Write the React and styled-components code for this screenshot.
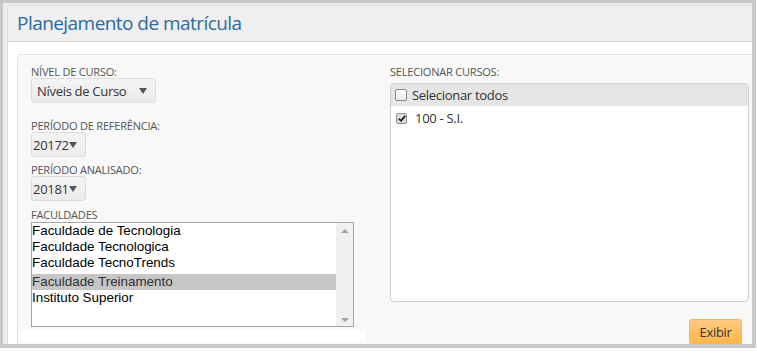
import React from "react";
import styled, { createGlobalStyle } from "styled-components";

const GlobalStyle = createGlobalStyle`
  html, body {
    margin: 0;
    padding: 0;
    background: #fff;
  }
  body {
    font-family: "Open Sans", "Liberation Sans", sans-serif;
    color: #333;
  }
`;

/* moldura cinza em volta do painel */
const Frame = styled.div`
  box-sizing: border-box;
  width: 756px;
  height: 348px;
  border: 3px solid #c8c8c8;
  border-right-width: 4px;
  border-bottom-width: 4px;
  padding: 2px 0 0 4px;
  background: #ececec;
  overflow: hidden;
`;

const Panel = styled.div`
  border: 1px solid #dcdcdc;
  border-right: none;
  border-radius: 4px 0 0 0;
  background: #fff;
  height: 100%;
`;

const Heading = styled.div`
  background: #efefef;
  border-bottom: 1px solid #d6d6d6;
  border-radius: 3px 0 0 0;
  padding: 5px 9px 6px;
`;

const Title = styled.h3`
  margin: 0;
  font-size: 19px;
  line-height: 24px;
  font-weight: 400;
  color: #2d6aa0;
  letter-spacing: -0.55px;
`;

const Body = styled.div`
  padding: 12px 0 0 9px;
`;

const Well = styled.div`
  background: #f8f8f8;
  border: 1px solid #e3e3e3;
  border-right: none;
  border-radius: 4px 0 0 0;
  padding: 11px 0 0 13px;
  min-height: 300px;
`;

const Columns = styled.div`
  display: grid;
  grid-template-columns: 345px 359px;
  column-gap: 14px;
  align-items: start;
`;

const Column = styled.div`
  display: flex;
  flex-direction: column;
  align-items: flex-start;
`;

const Field = styled.div`
  display: flex;
  flex-direction: column;
  align-items: flex-start;
  margin-bottom: ${(p) => p.$gap || 0}px;
`;

const Label = styled.label`
  display: block;
  font-size: 11px;
  line-height: 12px;
  color: #555;
  text-transform: uppercase;
  margin-bottom: ${(p) => p.$mb || 0}px;
  letter-spacing: -0.2px;
`;

const SelectButton = styled.div`
  box-sizing: border-box;
  display: flex;
  align-items: center;
  justify-content: space-between;
  width: ${(p) => p.$w}px;
  height: 25px;
  padding: 0 ${(p) => p.$pr}px 0 ${(p) => p.$pl}px;
  background: linear-gradient(#f4f4f4, #ebebeb);
  border: 1px solid #dcdcdc;
  border-radius: 3px;
  font-size: 13px;
  color: #333;
  letter-spacing: -0.3px;
`;

const Caret = styled.span`
  width: 0;
  height: 0;
  border-left: 4px solid transparent;
  border-right: 4px solid transparent;
  border-top: 6px solid #555;
`;

const ListBox = styled.div`
  box-sizing: border-box;
  display: flex;
  width: 323px;
  height: 105px;
  border: 1px solid #a5a5a5;
  background: #fff;
`;

const Options = styled.div`
  flex: 1;
`;

const Option = styled.div`
  font-family: "Liberation Sans", Arial, sans-serif;
  font-size: 13.4px;
  line-height: 16px;
  color: ${(p) => (p.$selected ? "#333" : "#000")};
  background: ${(p) => (p.$selected ? "#c6c6c6" : "transparent")};
  margin-top: ${(p) => (p.$gap ? 3 : 0)}px;
  white-space: nowrap;
`;

const ScrollBar = styled.div`
  width: 17px;
  background: #f0f0f0;
  display: flex;
  flex-direction: column;
  justify-content: space-between;
  align-items: center;
  padding: 6px 0 4px;
`;

const Arrow = styled.span`
  width: 0;
  height: 0;
  border-left: 4px solid transparent;
  border-right: 4px solid transparent;
  ${(p) =>
    p.$up ? "border-bottom: 4px solid #a3a3a3;" : "border-top: 4px solid #a3a3a3;"}
`;

const Strip = styled.div`
  width: 345px;
  height: 12px;
  margin: 3px 0 0 -11px;
  background: #fff;
`;

const CourseBox = styled.div`
  box-sizing: border-box;
  width: 359px;
  height: 219px;
  border: 1px solid #cfcfcf;
  border-radius: 4px;
  background: #fff;
  overflow: hidden;
`;

const CourseRow = styled.div`
  display: flex;
  align-items: center;
  gap: ${(p) => (p.$header ? 5 : 8)}px;
  height: ${(p) => (p.$header ? 22 : 24)}px;
  padding-left: ${(p) => (p.$header ? 4 : 5)}px;
  background: ${(p) => (p.$header ? "#e5e5e5" : "#fff")};
  font-size: 13px;
  color: #333;
  letter-spacing: -0.3px;
`;

const Check = styled.span`
  box-sizing: border-box;
  display: inline-flex;
  align-items: center;
  justify-content: center;
  width: ${(p) => (p.$checked ? 11 : 12)}px;
  height: ${(p) => (p.$checked ? 11 : 12)}px;
  border: 1px solid ${(p) => (p.$checked ? "#8f8f8f" : "#8a8a8a")};
  border-radius: 2px;
  background: ${(p) => (p.$checked ? "#dedede" : "linear-gradient(#fdfdfd, #ececec)")};
`;

const ButtonRow = styled.div`
  display: flex;
  justify-content: flex-end;
  width: 100%;
  margin-top: 17px;
`;

const Button = styled.button`
  box-sizing: border-box;
  width: 53px;
  height: 26px;
  margin-right: 7px;
  padding: 0;
  font-family: "Open Sans", "Liberation Sans", sans-serif;
  font-size: 13px;
  color: #333;
  background: linear-gradient(#ffcb82, #ffb547);
  border: 1px solid #f3b460;
  border-radius: 3px;
  letter-spacing: -0.3px;
`;

function Select({ value, width, pl, pr }) {
  return (
    <SelectButton $w={width} $pl={pl} $pr={pr}>
      <span>{value}</span>
      <Caret />
    </SelectButton>
  );
}

function Checkbox({ checked }) {
  return (
    <Check $checked={checked}>
      {checked && (
        <svg width="8" height="7" viewBox="0 0 8 7">
          <path d="M0.8 3.6 L3 5.8 L7.2 0.8" fill="none" stroke="#222" strokeWidth="1.8" />
        </svg>
      )}
    </Check>
  );
}

const faculdades = [
  "Faculdade de Tecnologia",
  "Faculdade Tecnologica",
  "Faculdade TecnoTrends",
  "Faculdade Treinamento",
  "Instituto Superior",
];

export default function App() {
  return (
    <>
      <GlobalStyle />
      <Frame>
        <Panel>
          <Heading>
            <Title>Planejamento de matrícula</Title>
          </Heading>
          <Body>
            <Well>
              <Columns>
                <Column>
                  <Field $gap={17}>
                    <Label>Nível de curso:</Label>
                    <Select value="Níveis de Curso" width={125} pl={5} pr={8} />
                  </Field>
                  <Field $gap={7}>
                    <Label>Período de referência:</Label>
                    <Select value="20172" width={55} pl={1} pr={9} />
                  </Field>
                  <Field $gap={8}>
                    <Label>Período analisado:</Label>
                    <Select value="20181" width={55} pl={1} pr={9} />
                  </Field>
                  <Field>
                    <Label $mb={1}>Faculdades</Label>
                    <ListBox>
                      <Options>
                        {faculdades.map((f, i) => (
                          <Option key={f} $selected={i === 3} $gap={i === 3}>
                            {f}
                          </Option>
                        ))}
                      </Options>
                      <ScrollBar>
                        <Arrow $up />
                        <Arrow />
                      </ScrollBar>
                    </ListBox>
                  </Field>
                  <Strip />
                </Column>
                <Column>
                  <Label $mb={5}>Selecionar cursos:</Label>
                  <CourseBox>
                    <CourseRow $header>
                      <Checkbox />
                      Selecionar todos
                    </CourseRow>
                    <CourseRow>
                      <Checkbox checked />
                      100 - S.I.
                    </CourseRow>
                  </CourseBox>
                  <ButtonRow>
                    <Button>Exibir</Button>
                  </ButtonRow>
                </Column>
              </Columns>
            </Well>
          </Body>
        </Panel>
      </Frame>
    </>
  );
}
